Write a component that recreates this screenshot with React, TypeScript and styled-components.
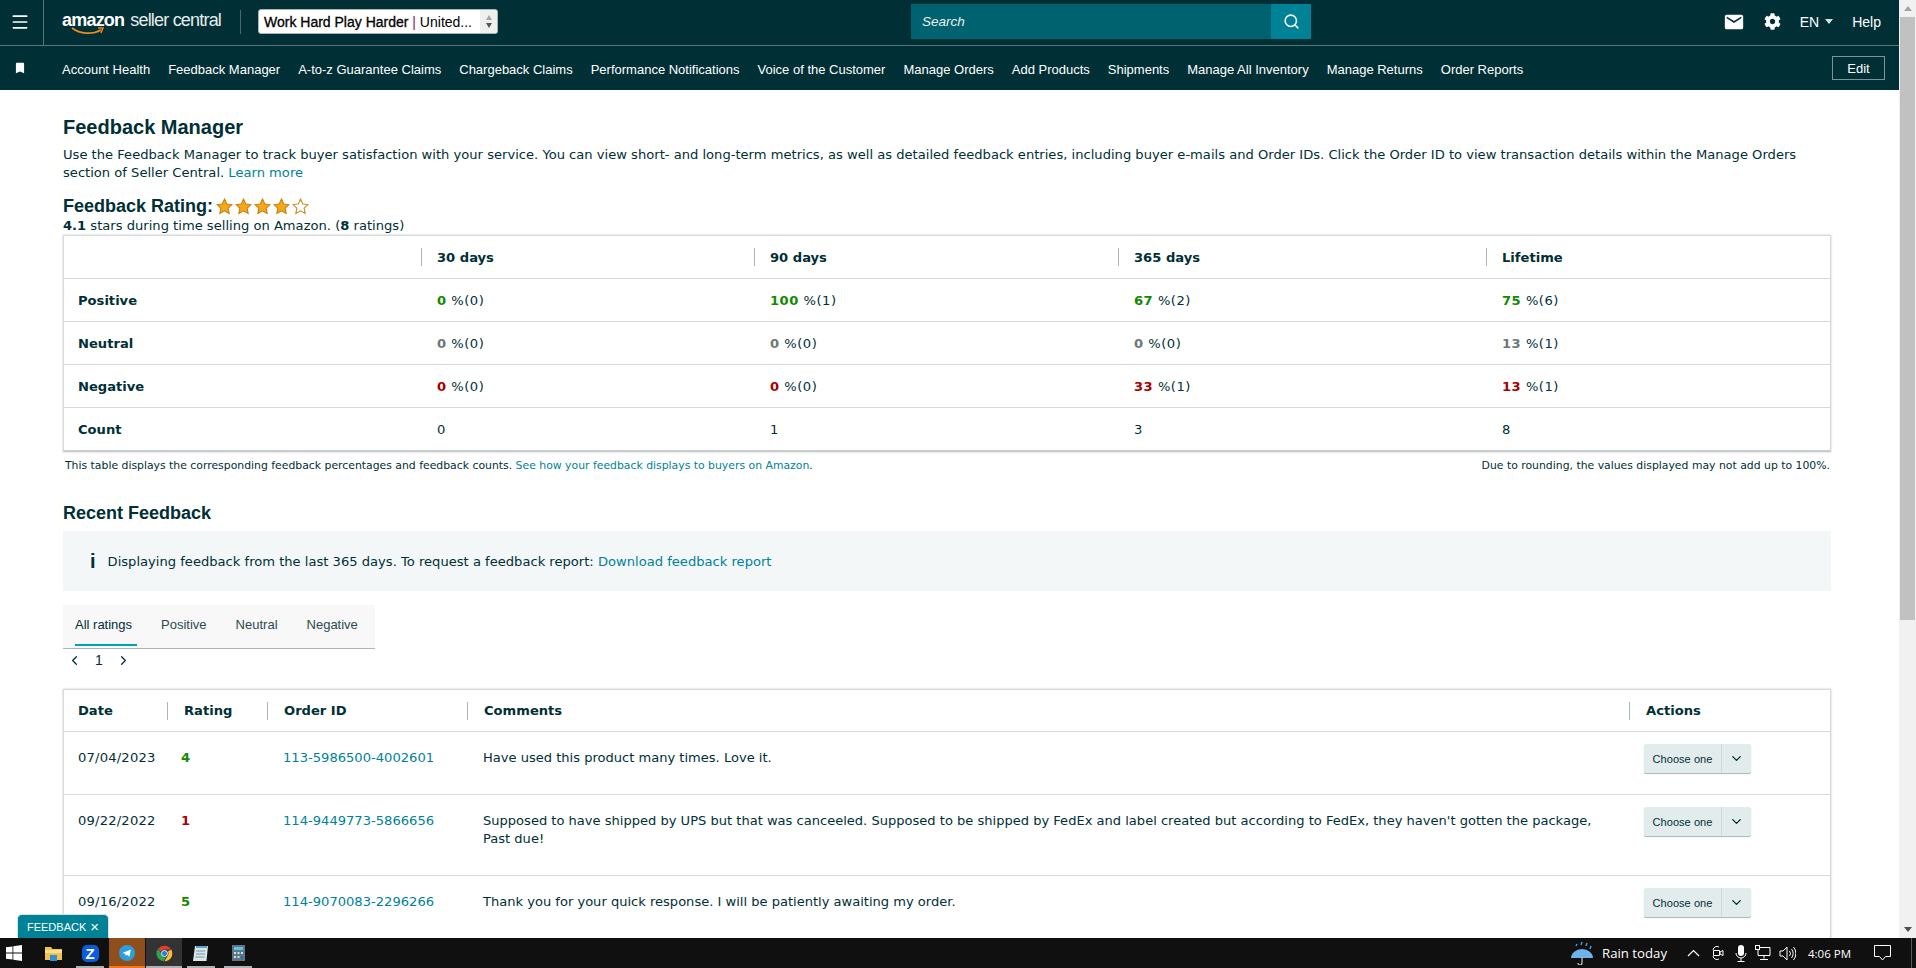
import React from 'react';
import styled, { createGlobalStyle } from 'styled-components';
import { Menu, Search, ChevronLeft, ChevronRight, ChevronDown } from 'lucide-react';
import { MdEmail, MdBookmark } from 'react-icons/md';
import { FaCog } from 'react-icons/fa';

const Global = createGlobalStyle`
  html, body {
    margin: 0;
    padding: 0;
    height: 100%;
    overflow: hidden;
    background: #fff;
  }
  * { box-sizing: border-box; }
`;

const Screen = styled.div`
  position: relative;
  width: 100%;
  height: 100vh;
  display: flex;
  flex-direction: column;
  font-family: 'DejaVu Sans', Verdana, sans-serif;
  font-size: 13.1px;
  color: #002f36;
`;

const Viewport = styled.div`
  flex: 1;
  min-height: 0;
  display: flex;
`;

const Page = styled.div`
  flex: 1;
  min-width: 0;
  overflow: hidden;
`;

const Scrollbar = styled.div`
  width: 17px;
  background: #f1f1f1;
  display: flex;
  flex-direction: column;
  align-items: center;
  justify-content: space-between;
`;

const ScrollThumb = styled.div`
  width: 15px;
  height: 603px;
  background: #c1c1c1;
`;

const ScrollArrow = styled.div<{ $up?: boolean }>`
  height: 17px;
  display: flex;
  align-items: center;
  justify-content: center;
  &::before {
    content: '';
    border-left: 4px solid transparent;
    border-right: 4px solid transparent;
    ${(p) => (p.$up ? 'border-bottom: 5px solid #a3a3a3;' : 'border-top: 5px solid #505050;')}
  }
`;

const ScrollTop = styled.div`
  display: flex;
  flex-direction: column;
  align-items: center;
`;

const TopBar = styled.header`
  height: 46px;
  background: #002f36;
  border-bottom: 1px solid #5c7478;
  padding-bottom: 2px;
  display: flex;
  align-items: center;
  font-family: 'Liberation Sans', Arial, sans-serif;
  color: #fff;
`;

const MenuCell = styled.div`
  width: 44px;
  height: 45px;
  align-self: flex-start;
  border-right: 1px solid #5c7478;
  padding: 0 3px 2px 0;
  display: flex;
  align-items: center;
  justify-content: center;
`;

const Logo = styled.div`
  width: 178px;
  margin-left: 18px;
  position: relative;
  display: flex;
  align-items: baseline;
  gap: 6px;
  height: 30px;
  line-height: 26px;
  white-space: nowrap;
`;

const LogoBold = styled.span`
  font-size: 18px;
  font-weight: 700;
  letter-spacing: -0.8px;
`;

const LogoThin = styled.span`
  font-size: 18px;
  letter-spacing: -0.8px;
  color: #e6ecec;
`;

const LogoSmile = styled.svg`
  position: absolute;
  left: 9px;
  top: 20px;
`;

const BarDivider = styled.div`
  width: 1px;
  height: 24px;
  background: #4d686c;
`;

const AccountSelect = styled.div`
  margin-left: 17px;
  width: 240px;
  height: 25px;
  background: #fff;
  border: 1px solid #a9b4b6;
  border-radius: 3px;
  display: flex;
  align-items: center;
  justify-content: space-between;
  padding-left: 5px;
  color: #000;
  font-size: 14px;
  overflow: hidden;
`;

const AccountName = styled.span`
  white-space: nowrap;
  b { font-weight: 400; -webkit-text-stroke: 0.3px #000; }
  i { font-style: normal; color: #7a1a7a; }
`;

const SelectArrows = styled.div`
  width: 17px;
  height: 100%;
  background: #efefef;
  display: flex;
  flex-direction: column;
  align-items: center;
  justify-content: center;
  gap: 3px;
`;

const SelectArrow = styled.div<{ $up?: boolean }>`
  border-left: 3.5px solid transparent;
  border-right: 3.5px solid transparent;
  ${(p) => (p.$up ? 'border-bottom: 5px solid #a5a5a5;' : 'border-top: 5px solid #555;')}
`;

const SearchBox = styled.div`
  margin-left: 413px;
  width: 400px;
  height: 35px;
  display: flex;
`;

const SearchInput = styled.div`
  flex: 1;
  background: #00626f;
  padding-left: 11px;
  display: flex;
  align-items: center;
  font-size: 13.5px;
  font-style: italic;
  color: #e8f0f0;
`;

const SearchButton = styled.div`
  width: 40px;
  background: #008296;
  display: flex;
  align-items: center;
  justify-content: center;
`;

const TopRight = styled.div`
  margin-left: auto;
  padding-right: 18px;
  display: flex;
  align-items: center;
  font-size: 14px;
`;

const EnLabel = styled.span`
  margin-left: 19px;
  display: flex;
  align-items: center;
  gap: 6px;
  &::after {
    content: '';
    border-left: 4px solid transparent;
    border-right: 4px solid transparent;
    border-top: 5px solid #d8e0e0;
  }
`;

const HelpLabel = styled.span`
  margin-left: 19px;
`;

const GearWrap = styled.span`
  margin-left: 19px;
  display: flex;
`;

const NavBar = styled.nav`
  height: 44px;
  background: #002f36;
  display: flex;
  align-items: center;
  font-family: 'Liberation Sans', Arial, sans-serif;
  font-size: 13px;
  color: #fff;
  padding-left: 13px;
  padding-right: 14px;
`;

const NavBookmark = styled.span`
  width: 49px;
  display: flex;
`;

const NavItems = styled.div`
  display: flex;
  gap: 18px;
  padding-top: 2px;
  white-space: nowrap;
`;

const EditButton = styled.div`
  margin-left: auto;
  width: 53px;
  height: 24px;
  border: 1px solid #7f9295;
  display: flex;
  align-items: center;
  justify-content: center;
`;

const Content = styled.main`
  padding: 25px 68px 0 63px;
`;

const PageTitle = styled.h1`
  margin: 0;
  font-family: 'Liberation Sans', Arial, sans-serif;
  font-size: 20px;
  line-height: 24px;
  font-weight: 700;
`;

const Intro = styled.p`
  margin: 7px 0 0;
  line-height: 18px;
  width: 1760px;
`;

const Link = styled.a`
  color: #008296;
`;

const RatingHead = styled.div`
  margin-top: 14px;
  display: flex;
  align-items: center;
  height: 20px;
  gap: 3px;
`;

const RatingTitle = styled.span`
  font-family: 'Liberation Sans', Arial, sans-serif;
  font-size: 18px;
  font-weight: 700;
`;

const Stars = styled.span`
  display: flex;
  gap: 2px;
`;

const RatingSummary = styled.div`
  line-height: 18px;
  margin-top: 1px;
  b { font-weight: 700; }
`;

const Card = styled.div`
  border: 1px solid #d5dbdb;
  border-bottom: 2px solid #c8cecf;
  box-shadow: 0 0 2px rgba(0, 0, 0, 0.22);
`;

const MetricsGrid = styled.div`
  display: grid;
  grid-template-columns: 357px 333px 364px 368px 1fr;
`;

const MetricsRow = styled.div<{ $head?: boolean }>`
  display: contents;
  & > div {
    height: ${(p) => (p.$head ? '42px' : '43px')};
    border-top: ${(p) => (p.$head ? 'none' : '1px solid #d5dbdb')};
  }
`;

const MetricLabel = styled.div`
  display: flex;
  align-items: center;
  padding-left: 14px;
  font-weight: 700;
`;

const HeadCell = styled.div`
  display: flex;
  align-items: center;
  font-weight: 700;
  &::before {
    content: '';
    width: 1px;
    height: 18px;
    background: #aab7b8;
    margin-right: 15px;
  }
`;

const ValueCell = styled.div`
  display: flex;
  align-items: center;
  padding-left: 16px;
  white-space: pre;
  letter-spacing: 0.5px;
`;

const Percent = styled.b<{ $tone: string }>`
  font-weight: 700;
  color: ${(p) => p.$tone};
`;

const TableNotes = styled.div`
  margin-top: 6px;
  display: flex;
  justify-content: space-between;
  padding: 0 1px 0 2px;
  font-size: 10.85px;
  line-height: 16px;
`;

const SectionTitle = styled.h2`
  margin: 28px 0 0;
  font-family: 'Liberation Sans', Arial, sans-serif;
  font-size: 18px;
  line-height: 22px;
  font-weight: 700;
`;

const InfoBox = styled.div`
  margin-top: 7px;
  height: 60px;
  background: #f3f7f8;
  display: flex;
  align-items: center;
  padding-left: 27px;
  gap: 12px;
`;

const InfoMark = styled.span`
  font-family: 'Liberation Sans', Arial, sans-serif;
  font-size: 20px;
  font-weight: 700;
`;

const Tabs = styled.div`
  margin-top: 14px;
  width: 312px;
  height: 44px;
  background: #f8f8f8;
  border-bottom: 1px solid #aab7b8;
  display: flex;
  padding-left: 12px;
  gap: 24px;
  font-family: 'Liberation Sans', Arial, sans-serif;
  font-size: 13px;
`;

const Tab = styled.div<{ $active?: boolean }>`
  height: 41px;
  padding-right: 5px;
  display: flex;
  align-items: center;
  border-bottom: 2px solid ${(p) => (p.$active ? '#00a3b4' : 'transparent')};
  color: ${(p) => (p.$active ? '#002f36' : '#2d4a50')};
`;

const Pager = styled.div`
  height: 22px;
  display: flex;
  align-items: center;
  padding-left: 4px;
  font-family: 'Liberation Sans', Arial, sans-serif;
  font-size: 14px;
  gap: 13px;
`;

const FeedbackCard = styled(Card)`
  margin-top: 18px;
  border-bottom: none;
`;

const FeedbackGrid = styled.div`
  display: grid;
  grid-template-columns: 103px 100px 200px 1162px 1fr;
`;

const FeedbackHead = styled.div`
  height: 42px;
  display: flex;
  align-items: center;
  font-weight: 700;
  border-bottom: 1px solid #d5dbdb;
`;

const FeedbackHeadLabel = styled.span<{ $first?: boolean }>`
  display: flex;
  align-items: center;
  ${(p) =>
    p.$first
      ? 'padding-left: 14px;'
      : `&::before {
    content: '';
    width: 1px;
    height: 18px;
    background: #aab7b8;
    margin-right: 16px;
  }`}
`;

const FeedbackCell = styled.div<{ $wide?: boolean }>`
  padding: 17px 0 27px ${(p) => (p.$wide ? 16 : 14)}px;
  line-height: 18px;
  border-bottom: 1px solid #d5dbdb;
`;

const DateText = styled.span`
  letter-spacing: 0.2px;
`;

const CommentText = styled.div`
  width: 1125px;
  font-size: 13.05px;
`;

const ActionCell = styled.div`
  padding: 12px 0 21px 15px;
  border-bottom: 1px solid #d5dbdb;
`;

const ActionButton = styled.div`
  width: 107px;
  height: 29px;
  display: flex;
  background: #e3ecec;
  border-radius: 2px;
  box-shadow: 0 1px 1px #a9b4b6;
  font-family: 'Liberation Sans', Arial, sans-serif;
  font-size: 11px;
  letter-spacing: 0.05px;
`;

const ActionLabel = styled.div`
  flex: 1;
  display: flex;
  align-items: center;
  justify-content: center;
  border-right: 1px solid #d0d9d9;
`;

const ActionCaret = styled.div`
  width: 29px;
  display: flex;
  align-items: center;
  justify-content: center;
`;

const FeedbackTab = styled.div`
  position: absolute;
  left: 17px;
  bottom: 30px;
  width: 92px;
  height: 24px;
  background: #008296;
  border: 1px solid #d5e5e7;
  border-bottom: none;
  border-radius: 5px 5px 0 0;
  color: #fff;
  font-family: 'Liberation Sans', Arial, sans-serif;
  font-size: 11px;
  display: flex;
  align-items: center;
  justify-content: center;
  gap: 4px;
`;

const CloseMark = styled.span`
  font-size: 15px;
  line-height: 1;
`;

const Taskbar = styled.footer`
  height: 30px;
  background: #101010;
  display: flex;
  align-items: stretch;
  color: #fff;
  font-family: 'Open Sans', 'Liberation Sans', sans-serif;
`;

const StartSlot = styled.div`
  width: 28px;
  margin-right: 7px;
  display: flex;
  align-items: center;
  justify-content: center;
`;

const TaskList = styled.div`
  display: flex;
  gap: 1px;
`;

const TaskSlot = styled.div<{ $bg?: string; $line?: string; $lineWidth?: number }>`
  position: relative;
  width: 36px;
  display: flex;
  align-items: center;
  justify-content: center;
  background: ${(p) => p.$bg ?? 'transparent'};
  &::after {
    content: '';
    position: absolute;
    bottom: 0;
    left: 50%;
    transform: translateX(-50%);
    width: ${(p) => p.$lineWidth ?? 36}px;
    height: 2px;
    background: ${(p) => p.$line ?? 'transparent'};
  }
`;

const ZaloBadge = styled.span`
  width: 17px;
  height: 17px;
  border-radius: 5px;
  background: #0a5be0;
  color: #fff;
  font-family: 'Liberation Sans', sans-serif;
  font-size: 15px;
  font-weight: 700;
  display: flex;
  align-items: center;
  justify-content: center;
`;

const Tray = styled.div`
  margin-left: auto;
  display: flex;
  align-items: center;
  padding-right: 4px;
`;

const TrayText = styled.span<{ $left: number; $size: number }>`
  margin-left: ${(p) => p.$left}px;
  font-size: ${(p) => p.$size}px;
  white-space: nowrap;
`;

const TrayIcon = styled.svg<{ $left: number }>`
  margin-left: ${(p) => p.$left}px;
  display: block;
`;

const TrayDivider = styled.div`
  margin-left: 20px;
  width: 1px;
  height: 100%;
  background: #5a5a5a;
`;

const NAV_ITEMS = [
  'Account Health',
  'Feedback Manager',
  'A-to-z Guarantee Claims',
  'Chargeback Claims',
  'Performance Notifications',
  'Voice of the Customer',
  'Manage Orders',
  'Add Products',
  'Shipments',
  'Manage All Inventory',
  'Manage Returns',
  'Order Reports',
];

const GREEN = '#138a00';
const GREY = '#6c7778';
const RED = '#a60000';

const METRICS = [
  { label: 'Positive', tone: GREEN, values: [['0', '0'], ['100', '1'], ['67', '2'], ['75', '6']] },
  { label: 'Neutral', tone: GREY, values: [['0', '0'], ['0', '0'], ['0', '0'], ['13', '1']] },
  { label: 'Negative', tone: RED, values: [['0', '0'], ['0', '0'], ['33', '1'], ['13', '1']] },
];

const FEEDBACK = [
  {
    date: '07/04/2023',
    rating: '4',
    tone: GREEN,
    order: '113-5986500-4002601',
    comment: 'Have used this product many times. Love it.',
  },
  {
    date: '09/22/2022',
    rating: '1',
    tone: RED,
    order: '114-9449773-5866656',
    comment:
      "Supposed to have shipped by UPS but that was canceeled. Supposed to be shipped by FedEx and label created but according to FedEx, they haven't gotten the package, Past due!",
  },
  {
    date: '09/16/2022',
    rating: '5',
    tone: GREEN,
    order: '114-9070083-2296266',
    comment: 'Thank you for your quick response. I will be patiently awaiting my order.',
  },
];

function Star({ filled }: { filled: boolean }) {
  return (
    <svg width="17" height="17" viewBox="0 0 24 24">
      <path
        d="M12 1.5l3.2 7 7.3.8-5.4 5 1.5 7.7L12 18.2 5.4 22l1.5-7.7-5.4-5 7.3-.8z"
        fill={filled ? '#f5a81c' : '#fff'}
        stroke={filled ? '#c77f0a' : '#c78b20'}
        strokeWidth="1.5"
      />
    </svg>
  );
}

function ActionsMenu() {
  return (
    <ActionButton>
      <ActionLabel>Choose one</ActionLabel>
      <ActionCaret>
        <ChevronDown size={15} strokeWidth={2.2} />
      </ActionCaret>
    </ActionButton>
  );
}

export default function App() {
  return (
    <Screen>
      <Global />
      <Viewport>
        <Page>
          <TopBar>
            <MenuCell>
              <Menu size={20} color="#fff" strokeWidth={2} />
            </MenuCell>
            <Logo>
              <LogoBold>amazon</LogoBold>
              <LogoThin>seller central</LogoThin>
              <LogoSmile width="34" height="10" viewBox="0 0 34 10">
                <path d="M1 1c8 6 20 7 29 2" fill="none" stroke="#f08a1d" strokeWidth="1.8" />
                <path d="M27 1l5 0-2 5" fill="none" stroke="#f08a1d" strokeWidth="1.4" />
              </LogoSmile>
            </Logo>
            <BarDivider />
            <AccountSelect>
              <AccountName>
                <b>Work Hard Play Harder</b> <i>|</i> United...
              </AccountName>
              <SelectArrows>
                <SelectArrow $up />
                <SelectArrow />
              </SelectArrows>
            </AccountSelect>
            <SearchBox>
              <SearchInput>Search</SearchInput>
              <SearchButton>
                <Search size={17} color="#fff" strokeWidth={2.2} />
              </SearchButton>
            </SearchBox>
            <TopRight>
              <MdEmail size={22} color="#fff" />
              <GearWrap>
                <FaCog size={17} color="#fff" />
              </GearWrap>
              <EnLabel>EN</EnLabel>
              <HelpLabel>Help</HelpLabel>
            </TopRight>
          </TopBar>
          <NavBar>
            <NavBookmark>
              <MdBookmark size={14} color="#fff" />
            </NavBookmark>
            <NavItems>
              {NAV_ITEMS.map((item) => (
                <span key={item}>{item}</span>
              ))}
            </NavItems>
            <EditButton>Edit</EditButton>
          </NavBar>
          <Content>
            <PageTitle>Feedback Manager</PageTitle>
            <Intro>
              Use the Feedback Manager to track buyer satisfaction with your service. You can view short- and long-term
              metrics, as well as detailed feedback entries, including buyer e-mails and Order IDs. Click the Order ID to
              view transaction details within the Manage Orders section of Seller Central. <Link>Learn more</Link>
            </Intro>
            <RatingHead>
              <RatingTitle>Feedback Rating:</RatingTitle>
              <Stars>
                {[true, true, true, true, false].map((filled, index) => (
                  <Star key={index} filled={filled} />
                ))}
              </Stars>
            </RatingHead>
            <RatingSummary>
              <b>4.1</b> stars during time selling on Amazon. (<b>8</b> ratings)
            </RatingSummary>
            <Card>
              <MetricsGrid>
                <MetricsRow $head>
                  <div />
                  <HeadCell>30 days</HeadCell>
                  <HeadCell>90 days</HeadCell>
                  <HeadCell>365 days</HeadCell>
                  <HeadCell>Lifetime</HeadCell>
                </MetricsRow>
                {METRICS.map((metric) => (
                  <MetricsRow key={metric.label}>
                    <MetricLabel>{metric.label}</MetricLabel>
                    {metric.values.map(([pct, count], index) => (
                      <ValueCell key={index}>
                        <Percent $tone={metric.tone}>{pct}</Percent> %({count})
                      </ValueCell>
                    ))}
                  </MetricsRow>
                ))}
                <MetricsRow>
                  <MetricLabel>Count</MetricLabel>
                  {['0', '1', '3', '8'].map((count, index) => (
                    <ValueCell key={index}>{count}</ValueCell>
                  ))}
                </MetricsRow>
              </MetricsGrid>
            </Card>
            <TableNotes>
              <span>
                This table displays the corresponding feedback percentages and feedback counts.{' '}
                <Link>See how your feedback displays to buyers on Amazon</Link>.
              </span>
              <span>Due to rounding, the values displayed may not add up to 100%.</span>
            </TableNotes>
            <SectionTitle>Recent Feedback</SectionTitle>
            <InfoBox>
              <InfoMark>i</InfoMark>
              <span>
                Displaying feedback from the last 365 days. To request a feedback report:{' '}
                <Link>Download feedback report</Link>
              </span>
            </InfoBox>
            <Tabs>
              <Tab $active>All ratings</Tab>
              <Tab>Positive</Tab>
              <Tab>Neutral</Tab>
              <Tab>Negative</Tab>
            </Tabs>
            <Pager>
              <ChevronLeft size={15} />
              <span>1</span>
              <ChevronRight size={15} />
            </Pager>
            <FeedbackCard>
              <FeedbackGrid>
                <FeedbackHead>
                  <FeedbackHeadLabel $first>Date</FeedbackHeadLabel>
                </FeedbackHead>
                <FeedbackHead>
                  <FeedbackHeadLabel>Rating</FeedbackHeadLabel>
                </FeedbackHead>
                <FeedbackHead>
                  <FeedbackHeadLabel>Order ID</FeedbackHeadLabel>
                </FeedbackHead>
                <FeedbackHead>
                  <FeedbackHeadLabel>Comments</FeedbackHeadLabel>
                </FeedbackHead>
                <FeedbackHead>
                  <FeedbackHeadLabel>Actions</FeedbackHeadLabel>
                </FeedbackHead>
                {FEEDBACK.map((row) => (
                  <React.Fragment key={row.order}>
                    <FeedbackCell>
                      <DateText>{row.date}</DateText>
                    </FeedbackCell>
                    <FeedbackCell>
                      <Percent $tone={row.tone}>{row.rating}</Percent>
                    </FeedbackCell>
                    <FeedbackCell $wide>
                      <Link>{row.order}</Link>
                    </FeedbackCell>
                    <FeedbackCell $wide>
                      <CommentText>{row.comment}</CommentText>
                    </FeedbackCell>
                    <ActionCell>
                      <ActionsMenu />
                    </ActionCell>
                  </React.Fragment>
                ))}
              </FeedbackGrid>
            </FeedbackCard>
          </Content>
        </Page>
        <Scrollbar>
          <ScrollTop>
            <ScrollArrow $up />
            <ScrollThumb />
          </ScrollTop>
          <ScrollArrow />
        </Scrollbar>
      </Viewport>
      <FeedbackTab>
        FEEDBACK <CloseMark>×</CloseMark>
      </FeedbackTab>
      <Taskbar>
        <StartSlot>
          <svg width="16" height="16" viewBox="0 0 16 16" fill="#fff">
            <path d="M0 2.3l6.5-.9v6.2H0zM7.3 1.3L16 0v7.6H7.3zM0 8.4h6.5v6.2L0 13.7zM7.3 8.4H16V16l-8.7-1.3z" />
          </svg>
        </StartSlot>
        <TaskList>
          <TaskSlot>
            <svg width="17" height="15" viewBox="0 0 17 15">
              <path d="M0 1h6l1.5 2H17v11H0z" fill="#f2c14e" />
              <path d="M0 4h17v3H0z" fill="#fbe08a" />
              <path d="M5 9h7v6H5z" fill="#2f8fd8" />
            </svg>
          </TaskSlot>
          <TaskSlot $line="#b0b0b0" $lineWidth={28}>
            <ZaloBadge>Z</ZaloBadge>
          </TaskSlot>
          <TaskSlot $bg="#8f4e1c" $line="#f2761b">
            <svg width="16" height="16" viewBox="0 0 16 16">
              <circle cx="8" cy="8" r="8" fill="#2a9fdc" />
              <path d="M3.3 7.9l8.6-3.4-1.4 7.2-2.6-1.9-1.3 1.3-.3-2.4z" fill="#fff" />
            </svg>
          </TaskSlot>
          <TaskSlot $bg="#333" $line="#b0b0b0">
            <svg width="17" height="17" viewBox="0 0 24 24">
              <path d="M12 1a11 11 0 0 1 9.5 5.5H12a5.5 5.5 0 0 0-5 3L3.2 5A11 11 0 0 1 12 1z" fill="#e53c2f" />
              <path d="M21.5 6.5A11 11 0 0 1 12 23l4.7-8.2A5.5 5.5 0 0 0 16.8 9z" fill="#fbc02d" />
              <path d="M3.2 5L7.9 13.2A5.5 5.5 0 0 0 14 17.3L11 23A11 11 0 0 1 3.2 5z" fill="#2fa24b" />
              <circle cx="12" cy="12" r="4.3" fill="#2f78e4" stroke="#fff" strokeWidth="1.2" />
            </svg>
          </TaskSlot>
          <TaskSlot $line="#b0b0b0" $lineWidth={28}>
            <svg width="16" height="17" viewBox="0 0 16 17">
              <path d="M2 1h13l-1.5 15H0z" fill="#d9e6ea" />
              <path d="M3 1h11v2H3z" fill="#5aa3c9" />
              <path d="M3 6h9M3 9h9M2.5 12h9" stroke="#7a93a0" />
            </svg>
          </TaskSlot>
          <TaskSlot $line="#b0b0b0" $lineWidth={28}>
            <svg width="13" height="16" viewBox="0 0 13 16">
              <path d="M0 0h13v16H0z" fill="#5d7685" />
              <path d="M2 2h9v3H2z" fill="#5fc0e8" />
              <path d="M2 7h2v2H2zM5.5 7h2v2h-2zM9 7h2v2H9zM2 11h2v2H2zM5.5 11h2v2h-2z" fill="#d6dde0" />
              <path d="M9 11h2v3H9z" fill="#1f6fb0" />
            </svg>
          </TaskSlot>
        </TaskList>
        <Tray>
          <TrayIcon $left={0} width="24" height="24" viewBox="0 0 24 24">
            <path d="M1 17a11 9 0 0 1 22 0z" fill="#6cb4ea" />
            <path d="M12 16v6a2 2 0 0 1-4 0" fill="none" stroke="#c8c8c8" strokeWidth="1.2" />
            <path d="M12 1l-1 3M17 2l-1 3M21 5l-1 3M7 3L6 5" stroke="#4d9fdc" strokeWidth="1.4" />
          </TrayIcon>
          <TrayText $left={8} $size={13.2}>
            Rain today
          </TrayText>
          <TrayIcon $left={20} width="13" height="8" viewBox="0 0 13 8">
            <path d="M1 7l5.5-5.5L12 7" fill="none" stroke="#fff" strokeWidth="1.2" />
          </TrayIcon>
          <TrayIcon $left={12} width="12" height="16" viewBox="0 0 12 16">
            <path d="M1 5a4 4 0 0 1 6-3M1 11a4 4 0 0 0 6 3" fill="none" stroke="#fff" />
            <path d="M1.5 5.5h6v5h-6zM8 7l3-1.5v5L8 9z" fill="none" stroke="#fff" />
          </TrayIcon>
          <TrayIcon $left={11} width="12" height="17" viewBox="0 0 12 17">
            <rect x="3" y="0" width="6" height="11" rx="3" fill="#fff" />
            <path d="M1 8a5 5 0 0 0 10 0M6 13v3M2.5 16.5h7" fill="none" stroke="#fff" />
          </TrayIcon>
          <TrayIcon $left={8} width="16" height="16" viewBox="0 0 16 16">
            <path d="M3 2.5h12v8H3zM9 10.5v3M5 14.5h8" fill="none" stroke="#fff" />
            <rect x="0.5" y="0.5" width="4" height="4" fill="#101010" stroke="#fff" />
          </TrayIcon>
          <TrayIcon $left={8} width="17" height="15" viewBox="0 0 17 15">
            <path d="M1 5h3l4-4v13l-4-4H1z" fill="none" stroke="#fff" />
            <path d="M10.5 5a4 4 0 0 1 0 5M12.5 3a7 7 0 0 1 0 9M14.5 1a10 10 0 0 1 0 13" fill="none" stroke="#fff" />
          </TrayIcon>
          <TrayText $left={12} $size={11.5}>
            4:06 PM
          </TrayText>
          <TrayIcon $left={23} width="17" height="16" viewBox="0 0 17 16">
            <path d="M.5.5h16v11h-5l-3 3.5-3-3.5h-5z" fill="none" stroke="#fff" />
          </TrayIcon>
          <TrayDivider />
        </Tray>
      </Taskbar>
    </Screen>
  );
}
